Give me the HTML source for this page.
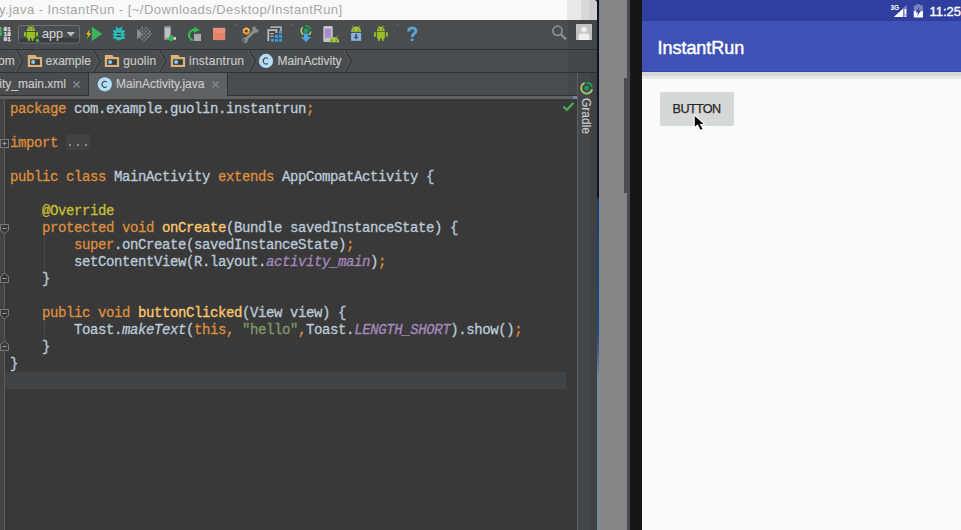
<!DOCTYPE html>
<html><head><meta charset="utf-8">
<style>
*{margin:0;padding:0;box-sizing:border-box}
html,body{width:961px;height:530px;overflow:hidden;background:#393939;position:relative;font-family:"Liberation Sans",sans-serif}
.a{position:absolute}
#title{left:0;top:0;width:597px;height:20px;background:#f9f9f9;overflow:hidden;border-top-right-radius:4px}
#title .t{left:-1px;top:2px;font-size:13px;letter-spacing:0.445px;color:#a6a6a6;white-space:nowrap;line-height:16px}
#toolbar{left:0;top:20px;width:597px;height:30px;background:#4a4d4f;border-bottom:1px solid #323232}
#crumbs{left:0;top:50px;width:597px;height:23px;background:#4a4d4f;border-bottom:1px solid #323232}
#tabs{left:0;top:73px;width:577px;height:23px;background:#4a4d4f;border-bottom:1px solid #323232}
#tabstrip{left:0;top:96px;width:577px;height:3px;background:#5e6163}
#editor{left:0;top:99px;width:577px;height:431px;background:#393939}
#gutter{left:0;top:99px;width:4px;height:431px;background:#434343}
#gutline{left:4px;top:99px;width:1px;height:431px;background:#5a5a5a}
#rstrip{left:577px;top:73px;width:20px;height:457px;background:#444648;border-left:1px solid #5e6163}
.code{font-family:"Liberation Mono",monospace;font-size:14px;letter-spacing:-0.4px;line-height:17px;white-space:pre;color:#bccad8;-webkit-text-stroke:0.3px}
.k{color:#de8e3e}.m{color:#ffc86e}.an{color:#c6be35}.s{color:#7e9a6a}.p{color:#a588bb;font-style:italic}.i{font-style:italic}
.txt{font-size:12px;color:#cacaca;white-space:nowrap;line-height:14px;-webkit-text-stroke:0.15px}
</style></head><body>
<div id="title" class="a"><div class="t a">y.java - InstantRun - [~/Downloads/Desktop/InstantRun]</div>
<div class="a" style="left:567px;top:0;width:14px;height:20px;background:#e9e9e9"></div>
<div class="a" style="left:581px;top:0;width:8px;height:20px;background:#d9d9d9"></div>
<div class="a" style="left:589px;top:0;width:8px;height:20px;background:#cecece"></div>
</div>
<div id="toolbar" class="a"></div>
<div id="crumbs" class="a"></div>
<div id="tabs" class="a"></div>
<div id="tabstrip" class="a"></div>
<div class="a" style="left:568px;top:20px;width:29px;height:53px;background:rgba(0,0,0,0.07)"></div>
<div class="a" style="left:568px;top:73px;width:9px;height:23px;background:rgba(0,0,0,0.07)"></div>
<div id="editor" class="a"></div>
<div id="gutter" class="a"></div>
<div id="gutline" class="a"></div>
<div id="rstrip" class="a"></div>
<div class="a" style="left:590px;top:73px;width:6.5px;height:457px;background:rgba(0,0,0,0.06)"></div>

<!-- toolbar icons -->
<svg class="a" style="left:0;top:0" width="597" height="50" viewBox="0 0 597 50">
  <!-- make arrow (cut) -->
  <path d="M-2 27 H1.5 V33 H2.8 L0 37 L-3 33 Z" fill="#3fb950"/>
  <g fill="#e6e6e6" font-family="Liberation Mono" font-weight="bold" font-size="6" stroke="#e6e6e6" stroke-width="0.25" style="text-rendering:geometricPrecision">
    <text x="3.6" y="31">01</text><text x="3.6" y="35.9">10</text><text x="3.6" y="40.9">01</text>
  </g>
  <!-- app combo -->
  <rect x="18.5" y="25.5" width="61" height="17.5" rx="2.5" fill="#4a4d4f" stroke="#6f7173" stroke-width="1"/>
  <path d="M19 38 H79 V40.5 a2 2 0 0 1 -2 2 H21 a2 2 0 0 1 -2 -2 Z" fill="#3c3d3e"/>
  <g fill="#97c024">
    <path d="M26.7 31 a4.15 4.6 0 0 1 8.3 0 Z"/>
    <rect x="26.7" y="32" width="8.3" height="6.2"/>
    <rect x="24" y="32" width="2" height="4.6" rx="1"/>
    <rect x="36" y="32" width="2" height="4.6" rx="1"/>
    <rect x="27.9" y="37" width="2" height="4" rx="0.8"/>
    <rect x="31.5" y="37" width="2" height="4" rx="0.8"/>
    <path d="M28 26 L29.3 27.8" stroke="#97c024" stroke-width="0.8"/>
    <path d="M33.7 26 L32.4 27.8" stroke="#97c024" stroke-width="0.8"/>
  </g>
  <circle cx="29.2" cy="28.9" r="0.6" fill="#4a4d4f"/><circle cx="32.5" cy="28.9" r="0.6" fill="#4a4d4f"/>
  <circle cx="37.5" cy="40.5" r="1.7" fill="#3cbf4a"/>
  <text x="42" y="38.3" font-family="Liberation Sans" font-size="12.6" fill="#d8d8d8">app</text>
  <path d="M66.5 32 H75 L70.75 36.6 Z" fill="#bdbdbd"/>
  <!-- lightning -->
  <path d="M89.8 29 L86.2 34.6 H88.4 L87 39 L91 33.2 H88.8 Z" fill="#f6c31c"/>
  <!-- play -->
  <path d="M91.8 26.8 V41 L102.3 34 Z" fill="#3db45c"/>
  <!-- bug -->
  <g fill="#2bbdb5">
    <ellipse cx="118.9" cy="34.3" rx="4.9" ry="6.2"/>
    <rect x="112.8" y="30.3" width="12.3" height="1.9" rx="0.9"/>
    <rect x="112.8" y="33.5" width="12.3" height="1.9" rx="0.9"/>
    <rect x="112.8" y="36.8" width="12.3" height="1.9" rx="0.9"/>
    <path d="M115.8 27 L117.6 29.3 M122 27 L120.2 29.3" stroke="#2bbdb5" stroke-width="1.4"/>
  </g>
  <rect x="116.6" y="32.7" width="4.6" height="1.3" rx="0.6" fill="#3f4446"/>
  <rect x="116.6" y="35.6" width="4.6" height="1.3" rx="0.6" fill="#3f4446"/>
  <!-- coverage -->
  <path d="M137 29 V39.2 L142.8 34.1 Z" fill="#8d8d8d"/>
  <g fill="#8a8a8a">
    <circle cx="142.2" cy="27.7" r="0.9"/><circle cx="146" cy="27.7" r="0.9"/>
    <circle cx="140.3" cy="29.6" r="0.9"/><circle cx="144.1" cy="29.6" r="0.9"/><circle cx="147.9" cy="29.6" r="0.9"/>
    <circle cx="142.2" cy="31.5" r="0.9"/><circle cx="146" cy="31.5" r="0.9"/><circle cx="149.8" cy="31.5" r="0.9"/>
    <circle cx="144.1" cy="33.4" r="0.9"/><circle cx="147.9" cy="33.4" r="0.9"/><circle cx="150.6" cy="33.6" r="0.9"/>
    <circle cx="142.2" cy="35.3" r="0.9"/><circle cx="146" cy="35.3" r="0.9"/><circle cx="149.8" cy="35.3" r="0.9"/>
    <circle cx="140.3" cy="37.2" r="0.9"/><circle cx="144.1" cy="37.2" r="0.9"/><circle cx="147.9" cy="37.2" r="0.9"/>
    <circle cx="142.2" cy="39.1" r="0.9"/><circle cx="146" cy="39.1" r="0.9"/>
    <circle cx="144.1" cy="40.6" r="0.8"/>
  </g>
  <rect x="141.8" y="33.2" width="1.6" height="1.8" fill="#4a6aa0"/>
  <!-- device + bug -->
  <rect x="164" y="26" width="7" height="14" rx="1" fill="#8f8f8f"/>
  <rect x="165.1" y="28" width="4.8" height="9.8" fill="#c2c2c2"/>
  <ellipse cx="171.2" cy="38.3" rx="2.5" ry="3" fill="#2fb84e"/>
  <rect x="173.4" y="37" width="2.6" height="2.8" fill="#c8c8c8"/>
  <!-- restart -->
  <path d="M193 40.2 A5.2 5.2 0 0 1 195 30" fill="none" stroke="#33c052" stroke-width="2.2"/>
  <path d="M194 27 L199.8 29.9 L194 32.8 Z" fill="#33c052"/>
  <rect x="194" y="33.9" width="7" height="7.1" fill="#acacac"/>
  <!-- stop -->
  <rect x="213" y="27.9" width="12.2" height="12.2" fill="#e5826d"/>
  <rect x="213" y="27.9" width="12.2" height="5" fill="#e98f7b"/>
  <!-- separator dots -->
  <rect x="235" y="24" width="1" height="1" fill="#7a7a7a"/>
  <rect x="291" y="24" width="1" height="1" fill="#7a7a7a"/>
  <rect x="397" y="24" width="1" height="1" fill="#7a7a7a"/>
  <!-- wrench + gear -->
  <path d="M245.2 40 L255.2 30" stroke="#8e8e8e" stroke-width="3" stroke-linecap="round"/>
  <circle cx="255.6" cy="29.6" r="3.3" fill="#8e8e8e"/>
  <path d="M256.2 25.6 L259.4 28.8 L256.8 31.4 L253.6 28.2 Z" fill="#4a4d4f" transform="translate(1.2 -1.2)"/>
  <circle cx="245" cy="40.2" r="2.8" fill="#8e8e8e"/>
  <path d="M242.4 42.8 L244.6 40.6 M244.6 40.6 L243.2 39.2" stroke="#4a4d4f" stroke-width="1.4"/>
  <path d="M246.3 27.2 L249.7 29.15 V33.05 L246.3 35 L242.9 33.05 V29.15 Z" fill="#eb9a30"/>
  <path d="M246.3 27.2 L249.7 29.15 V31 H242.9 V29.15 Z" fill="#f2ac48"/>
  <circle cx="246.3" cy="31.1" r="1.4" fill="#3a3a3a"/>
  <!-- project structure -->
  <path d="M270.2 27.2 H281 V31" stroke="#a9a9a9" stroke-width="1.8" fill="none"/>
  <path d="M268.3 41 V30.2 H276.5 V33" stroke="#bdbdbd" stroke-width="1.8" fill="none"/>
  <rect x="270.5" y="33.2" width="3" height="1" fill="#cfcfcf"/><rect x="270.5" y="35.7" width="3" height="1" fill="#cfcfcf"/>
  <g fill="#3a9ad9">
    <rect x="279" y="30.8" width="3" height="3"/>
    <rect x="275" y="34.8" width="3" height="3"/><rect x="279" y="34.8" width="3" height="3"/>
    <rect x="271" y="38.8" width="3" height="3"/><rect x="275" y="38.8" width="3" height="3"/><rect x="279" y="38.8" width="3" height="3"/>
  </g>
  <!-- gradle sync -->
  <path d="M302.6 27.2 A4.8 4.8 0 0 0 303.4 34.6" stroke="#a6d46c" stroke-width="1.6" fill="none"/>
  <path d="M305.2 26 A4.8 4.8 0 0 1 310.6 29.5" stroke="#1aa65a" stroke-width="1.8" fill="none"/>
  <path d="M310.8 31.5 A4.8 4.8 0 0 1 308.8 34.8" stroke="#a6d46c" stroke-width="1.6" fill="none"/>
  <circle cx="306" cy="30.8" r="2.3" fill="#1ca85c"/>
  <path d="M304 33.5 H308 V37 H311 L306 42.1 L301 37 H304 Z" fill="#4aa6df"/>
  <!-- AVD -->
  <rect x="323.3" y="26" width="9.5" height="16" rx="1.5" fill="#c5c5c5"/>
  <rect x="324.8" y="28.8" width="6.4" height="9" fill="#a98bd2"/>
  <path d="M329 42.2 a5.1 5.2 0 0 1 10.3 0 Z" fill="#a4c639"/>
  <path d="M330.5 35.7 L331.6 37.4 M337.8 35.7 L336.7 37.4" stroke="#a4c639" stroke-width="0.9"/>
  <circle cx="331.9" cy="40.2" r="0.7" fill="#4a4d4f"/><circle cx="336.3" cy="40.2" r="0.7" fill="#4a4d4f"/>
  <!-- SDK -->
  <path d="M351.1 31.7 a5 5.2 0 0 1 10 0 Z" fill="#a4c639"/>
  <path d="M352.4 25.8 L353.6 27.6 M359.8 25.8 L358.6 27.6" stroke="#a4c639" stroke-width="0.9"/>
  <circle cx="353.8" cy="29.9" r="0.7" fill="#4a4d4f"/><circle cx="358.4" cy="29.9" r="0.7" fill="#4a4d4f"/>
  <rect x="351.1" y="32.9" width="10" height="7.9" fill="#87b5de"/>
  <path d="M355.3 34 H357 V36.8 H358.6 L356.15 39.4 L353.7 36.8 H355.3 Z" fill="#3e4a55"/>
  <!-- android -->
  <g fill="#97c024">
    <path d="M376.9 31.3 a3.95 4.8 0 0 1 7.9 0 Z"/>
    <rect x="376.9" y="32" width="7.9" height="6.3"/>
    <rect x="374" y="32" width="1.9" height="5" rx="0.9"/>
    <rect x="385.9" y="32" width="1.9" height="5" rx="0.9"/>
    <rect x="378" y="37" width="2" height="4.1" rx="0.8"/>
    <rect x="381.7" y="37" width="2" height="4.1" rx="0.8"/>
    <path d="M378.2 25.8 L379.4 27.6 M383.5 25.8 L382.3 27.6" stroke="#97c024" stroke-width="0.9"/>
  </g>
  <circle cx="379.4" cy="29.2" r="0.6" fill="#4a4d4f"/><circle cx="382.3" cy="29.2" r="0.6" fill="#4a4d4f"/>
  <!-- help -->
  <path d="M408.6 31.4 C408.6 26.8 416 26.8 416 30.8 C416 33.6 412.2 33.6 412.2 37" stroke="#5ca3db" stroke-width="2.9" fill="none"/>
  <circle cx="412.2" cy="39.7" r="1.5" fill="#5ca3db"/>
  <!-- search -->
  <circle cx="557.5" cy="30.8" r="4.6" stroke="#8a8a8a" stroke-width="1.8" fill="none"/>
  <path d="M560.8 34.1 L566 39.4" stroke="#8a8a8a" stroke-width="2.4"/>
  <!-- user -->
  <rect x="576" y="24" width="16" height="16" fill="#c3c3c3"/>
  <circle cx="584" cy="29.5" r="2.8" fill="#f0f0f0"/>
  <path d="M578.5 40 V36.5 a3 3 0 0 1 3 -3 H586.5 a3 3 0 0 1 3 3 V40 Z" fill="#f0f0f0"/>
</svg>

<!-- breadcrumbs -->
<svg class="a" style="left:0;top:49px" width="577" height="24" viewBox="0 49 577 24">
  
  <path d="M15.5 50.0 L21.7 61.1 L15.5 72.2" stroke="#646769" stroke-width="1" fill="none"/><path d="M16.5 50.0 L22.7 61.1 L16.5 72.2" stroke="#2f3133" stroke-width="1.1" fill="none"/>
  <path d="M92.5 50.0 L98.7 61.1 L92.5 72.2" stroke="#646769" stroke-width="1" fill="none"/><path d="M93.5 50.0 L99.7 61.1 L93.5 72.2" stroke="#2f3133" stroke-width="1.1" fill="none"/>
  <path d="M158.5 50.0 L164.7 61.1 L158.5 72.2" stroke="#646769" stroke-width="1" fill="none"/><path d="M159.5 50.0 L165.7 61.1 L159.5 72.2" stroke="#2f3133" stroke-width="1.1" fill="none"/>
  <path d="M248.0 50.0 L254.2 61.1 L248.0 72.2" stroke="#646769" stroke-width="1" fill="none"/><path d="M249.0 50.0 L255.2 61.1 L249.0 72.2" stroke="#2f3133" stroke-width="1.1" fill="none"/>
  <path d="M344.0 50.0 L350.2 61.1 L344.0 72.2" stroke="#646769" stroke-width="1" fill="none"/><path d="M345.0 50.0 L351.2 61.1 L345.0 72.2" stroke="#2f3133" stroke-width="1.1" fill="none"/>
  <g transform="translate(27.8 54.9)"><path d="M0 0 H7.5 L9 2.1 H14.3 V12.2 H0 Z" fill="#dcb277"/><rect x="2.3" y="4.3" width="9.8" height="5.7" fill="#3b3e40"/><circle cx="5.3" cy="7" r="2" fill="#8ec6ef"/></g>
  <g transform="translate(104.8 54.9)"><path d="M0 0 H7.5 L9 2.1 H14.3 V12.2 H0 Z" fill="#dcb277"/><rect x="2.3" y="4.3" width="9.8" height="5.7" fill="#3b3e40"/><circle cx="5.3" cy="7" r="2" fill="#8ec6ef"/></g>
  <g transform="translate(170.8 54.9)"><path d="M0 0 H7.5 L9 2.1 H14.3 V12.2 H0 Z" fill="#dcb277"/><rect x="2.3" y="4.3" width="9.8" height="5.7" fill="#3b3e40"/><circle cx="5.3" cy="7" r="2" fill="#8ec6ef"/></g>
  <circle cx="266" cy="60.9" r="7.1" fill="#b3ddf8"/>
  <path d="M267.9 58.6 A2.9 3 0 1 0 267.9 63.3" stroke="#3a3a3a" stroke-width="1.05" fill="none"/>
</svg>
<div class="a txt" style="left:-2px;top:54px">om</div>
<div class="a txt" style="left:45.5px;top:54px">example</div>
<div class="a txt" style="left:123.2px;top:54px;letter-spacing:0.2px">guolin</div>
<div class="a txt" style="left:189px;top:54px;letter-spacing:0.26px">instantrun</div>
<div class="a txt" style="left:277.5px;top:54px">MainActivity</div>

<!-- tabs -->
<div class="a" style="left:88px;top:73px;width:1px;height:23px;background:#2f3133"></div>
<div class="a" style="left:89px;top:73px;width:138px;height:24px;background:#5e6163"></div>
<div class="a" style="left:227px;top:73px;width:1px;height:23px;background:#2f3133"></div>
<div class="a txt" style="left:-0.7px;top:76.7px">ity_main.xml</div>
<div class="a txt" style="left:116px;top:76.7px">MainActivity.java</div>
<svg class="a" style="left:0;top:73px" width="577" height="23" viewBox="0 73 577 23">
  <path d="M73.5 81.5 L79.5 87.5 M79.5 81.5 L73.5 87.5" stroke="#8a8c8e" stroke-width="1.2"/>
  <path d="M212.5 81.5 L218.5 87.5 M218.5 81.5 L212.5 87.5" stroke="#8a8c8e" stroke-width="1.2"/>
  <circle cx="104.8" cy="84.3" r="7.1" fill="#b3ddf8"/>
  <path d="M106.7 82 A2.9 3 0 1 0 106.7 86.7" stroke="#3a3a3a" stroke-width="1.05" fill="none"/>
</svg>

<!-- gutter markers -->
<svg class="a" style="left:0;top:99px" width="577" height="431" viewBox="0 99 577 431">
  <rect x="0.5" y="139.5" width="8" height="8" fill="#393939" stroke="#7a7a7a"/>
  <path d="M2.5 143.5 H6.5 M4.5 141.5 V145.5" stroke="#9a9a9a"/>
  <path d="M0.5 224.5 H8.5 V230.5 L4.5 234 L0.5 230.5 Z" fill="#393939" stroke="#7a7a7a"/>
  <path d="M2.5 228.5 H6.5" stroke="#9a9a9a"/>
  <path d="M0.5 282.5 H8.5 V276.5 L4.5 273 L0.5 276.5 Z" fill="#393939" stroke="#7a7a7a"/>
  <path d="M2.5 278.5 H6.5" stroke="#9a9a9a"/>
  <path d="M0.5 309.5 H8.5 V315.5 L4.5 319 L0.5 315.5 Z" fill="#393939" stroke="#7a7a7a"/>
  <path d="M2.5 313.5 H6.5" stroke="#9a9a9a"/>
  <path d="M0.5 350.5 H8.5 V344.5 L4.5 341 L0.5 344.5 Z" fill="#393939" stroke="#7a7a7a"/>
  <path d="M2.5 346.5 H6.5" stroke="#9a9a9a"/>
  <path d="M44.5 236 V269 M44.5 321 V338" stroke="#4a4a4a"/>
  <path d="M563.5 106.5 L566.8 110 L573.5 102.8" stroke="#4fae4f" stroke-width="2.2" fill="none"/>
</svg>
<div class="a" style="left:5px;top:372px;width:561px;height:17px;background:#424344"></div>
<div class="a" style="left:66px;top:134px;width:24px;height:16px;background:#424242"></div>
<div class="a" style="left:68.5px;top:144.3px;width:2px;height:2px;background:#8c8c8c"></div><div class="a" style="left:76.5px;top:144.3px;width:2px;height:2px;background:#8c8c8c"></div><div class="a" style="left:84.5px;top:144.3px;width:2px;height:2px;background:#8c8c8c"></div>

<!-- code -->
<div class="a code" style="left:10px;top:100.8px"><span class="k">package</span> com.example.guolin.instantrun<span class="k">;</span>

<span class="k">import</span>

<span class="k">public class</span> MainActivity <span class="k">extends</span> AppCompatActivity {

    <span class="an">@Override</span>
    <span class="k">protected void</span> <span class="m">onCreate</span>(Bundle savedInstanceState) {
        <span class="k">super</span>.onCreate(savedInstanceState)<span class="k">;</span>
        setContentView(R.layout.<span class="p">activity_main</span>)<span class="k">;</span>
    }

    <span class="k">public void</span> <span class="m">buttonClicked</span>(View view) {
        Toast.<span class="i">makeText</span>(<span class="k">this, </span><span class="s">"hello"</span><span class="k">,</span>Toast.<span class="p">LENGTH_SHORT</span>).show()<span class="k">;</span>
    }
}</div>

<!-- right strip -->
<svg class="a" style="left:577px;top:73px" width="20" height="80" viewBox="577 73 20 80">
  <path d="M586.6 82.6 A5.5 5.5 0 0 1 592 87" stroke="#16a35a" stroke-width="1.9" fill="none"/>
  <path d="M592.1 89.2 A5.5 5.5 0 1 1 584.8 82.9" stroke="#a0c46a" stroke-width="1.9" fill="none"/>
  <circle cx="586.6" cy="88.1" r="2.4" fill="#17a058"/>
</svg>
<div class="a txt" style="left:568px;top:109px;width:36px;transform:rotate(90deg);transform-origin:center;text-align:center">Gradle</div>
<div class="a" style="left:573px;top:96px;width:4px;height:3px;background:#6a8aa8"></div>

<!-- emulator side -->
<div class="a" style="left:596.5px;top:0;width:2.5px;height:530px;background:linear-gradient(#0a1226 0,#0a1226 196px,#173f70 200px,#1a4a80 330px,#4a5a90 350px,#7a8aa0 380px,#7a8aa0 530px)"></div>
<div class="a" style="left:599px;top:0;width:28px;height:530px;background:#858585"></div>
<div class="a" style="left:624px;top:78px;width:3px;height:115px;background:#4c4c4c"></div>
<div class="a" style="left:627px;top:0;width:3px;height:530px;background:#4c4c4e"></div>
<div class="a" style="left:630px;top:0;width:12px;height:530px;background:#161616"></div>
<div id="screen" class="a" style="left:642px;top:0;width:319px;height:530px;background:#fafafa"></div>
<div class="a" style="left:642px;top:72px;width:319px;height:4px;background:#d5d6d5"></div><div class="a" style="left:642px;top:76px;width:319px;height:3px;background:#e6e7e7"></div>
<div class="a" style="left:642px;top:0;width:319px;height:21px;background:#303f9f"></div>
<div class="a" style="left:642px;top:21px;width:319px;height:51px;background:#3f51b5;border-bottom:1px solid #3747aa"></div>
<div class="a" style="left:657.5px;top:37.2px;font-size:18px;line-height:22px;color:#fff;white-space:nowrap;-webkit-text-stroke:0.45px #fff;letter-spacing:-0.03px">InstantRun</div>
<div class="a" style="left:660px;top:92px;width:73.5px;height:34px;background:#d6d7d7;border-radius:2px"></div>
<div class="a" style="left:672.6px;top:102.2px;font-size:12.6px;line-height:14px;color:#262626;white-space:nowrap;letter-spacing:-0.6px;-webkit-text-stroke:0.25px #262626">BUTTON</div>
<svg class="a" style="left:860px;top:0" width="101" height="21" viewBox="860 0 101 21">
  <text x="890.5" y="10.2" font-family="Liberation Sans" font-weight="bold" font-size="6.5" fill="#fff">3G</text>
  <path d="M906.8 4.7 V17 H893.9 Z" fill="#fff" fill-opacity="0.35"/>
  <path d="M903 8.8 V17 H893.9 Z" fill="#fff"/>
  <rect x="904.6" y="9" width="1.6" height="5.5" fill="#fff"/><rect x="904.6" y="15.4" width="1.6" height="1.6" fill="#fff"/>
  <rect x="913.8" y="5.4" width="9.2" height="12" fill="#fff" fill-opacity="0.35"/>
  <rect x="916.5" y="4.2" width="3.8" height="1.4" fill="#fff" fill-opacity="0.35"/>
  <rect x="913.8" y="11" width="9.2" height="6.4" fill="#fff"/>
  <path d="M919.6 6.5 L915.6 12.4 H918.2 L916.9 16.2 L921.2 10.4 H918.6 Z" fill="#303f9f"/>
  <text x="929.5" y="16" font-family="Liberation Sans" font-size="13" fill="#fff" stroke="#fff" stroke-width="0.35">11:25</text>
</svg>
<!-- cursor -->
<svg class="a" style="left:690px;top:112px" width="20" height="22" viewBox="690 112 20 22">
  <path d="M694.8 115.9 V126.8 L697.6 124.3 L700.6 129.8 L702.6 128.9 L699.7 123.9 L703.6 123.9 Z" fill="#fff" stroke="#fff" stroke-width="2.2" stroke-linejoin="round"/><path d="M694.8 115.9 V126.8 L697.6 124.3 L700.6 129.8 L702.6 128.9 L699.7 123.9 L703.6 123.9 Z" fill="#000"/>
</svg>
</body></html>
